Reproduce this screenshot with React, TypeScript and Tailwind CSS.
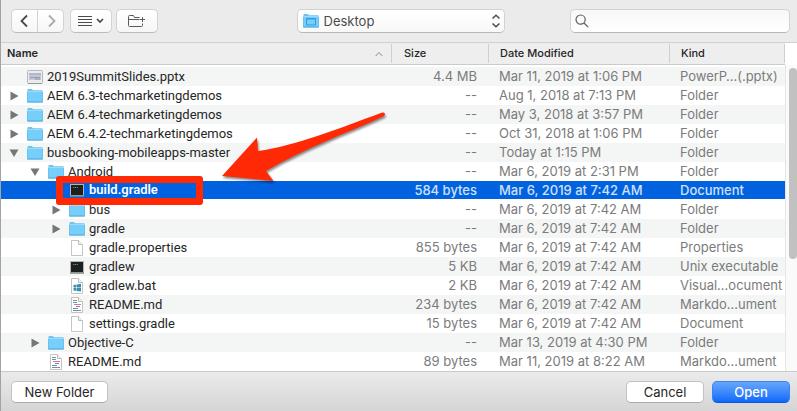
import { useState } from "react";

type IconKind = "slides" | "folder" | "terminal" | "blank" | "windows" | "markdown";

interface Entry {
  name: string;
  level: number;
  icon: IconKind;
  state?: "open" | "closed";
  size: string;
  date: string;
  kind: string;
}

const entries: Entry[] = [
  { name: "2019SummitSlides.pptx", level: 0, icon: "slides", size: "4.4 MB", date: "Mar 11, 2019 at 1:06 PM", kind: "PowerP…(.pptx)" },
  { name: "AEM 6.3-techmarketingdemos", level: 0, icon: "folder", state: "closed", size: "--", date: "Aug 1, 2018 at 7:13 PM", kind: "Folder" },
  { name: "AEM 6.4-techmarketingdemos", level: 0, icon: "folder", state: "closed", size: "--", date: "May 3, 2018 at 3:57 PM", kind: "Folder" },
  { name: "AEM 6.4.2-techmarketingdemos", level: 0, icon: "folder", state: "closed", size: "--", date: "Oct 31, 2018 at 1:06 PM", kind: "Folder" },
  { name: "busbooking-mobileapps-master", level: 0, icon: "folder", state: "open", size: "--", date: "Today at 1:15 PM", kind: "Folder" },
  { name: "Android", level: 1, icon: "folder", state: "open", size: "--", date: "Mar 6, 2019 at 2:31 PM", kind: "Folder" },
  { name: "build.gradle", level: 2, icon: "terminal", size: "584 bytes", date: "Mar 6, 2019 at 7:42 AM", kind: "Document" },
  { name: "bus", level: 2, icon: "folder", state: "closed", size: "--", date: "Mar 6, 2019 at 7:42 AM", kind: "Folder" },
  { name: "gradle", level: 2, icon: "folder", state: "closed", size: "--", date: "Mar 6, 2019 at 7:42 AM", kind: "Folder" },
  { name: "gradle.properties", level: 2, icon: "blank", size: "855 bytes", date: "Mar 6, 2019 at 7:42 AM", kind: "Properties" },
  { name: "gradlew", level: 2, icon: "terminal", size: "5 KB", date: "Mar 6, 2019 at 7:42 AM", kind: "Unix executable" },
  { name: "gradlew.bat", level: 2, icon: "windows", size: "2 KB", date: "Mar 6, 2019 at 7:42 AM", kind: "Visual…ocument" },
  { name: "README.md", level: 2, icon: "markdown", size: "234 bytes", date: "Mar 6, 2019 at 7:42 AM", kind: "Markdo…ument" },
  { name: "settings.gradle", level: 2, icon: "blank", size: "15 bytes", date: "Mar 6, 2019 at 7:42 AM", kind: "Document" },
  { name: "Objective-C", level: 1, icon: "folder", state: "closed", size: "--", date: "Mar 13, 2019 at 4:30 PM", kind: "Folder" },
  { name: "README.md", level: 1, icon: "markdown", size: "89 bytes", date: "Mar 11, 2019 at 8:22 AM", kind: "Markdo…ument" },
];

const indents = ["pl-2", "pl-[29px]", "pl-[50px]"];

function FolderIcon({ desktop = false }: { desktop?: boolean }) {
  return (
    <svg width="16" height="16" viewBox="0 0 16 16" className="shrink-0" aria-hidden="true">
      <path d="M0.5 3V1.8q0-.8.8-.8h3.4l1.3 1.3h9.2q.3 0 .3.5V5H.5z" fill="#6fc3ec" />
      <path d="M0 3.6h16v10.1q0 .8-.8.8H.8q-.8 0-.8-.8z" fill="#76cefa" />
      <path d="M0 3.5h16" stroke="#9adcfb" />
      <path d="M.3 14h15.4" stroke="#4fa9d8" />
      <path d="M.3 4v10M15.7 4v10" stroke="#5bb6e4" strokeWidth=".6" />
      {desktop && <path d="M3.5 5.5h9v6.5h-9zM3.5 6h9" fill="none" stroke="#2c9fe0" />}
    </svg>
  );
}

function PagePaths() {
  return (
    <>
      <path d="M2.5.5h7l4 4v11h-11z" fill="#fff" stroke="#c4c4c4" />
      <path d="M9.5.5v4h4" fill="#f4f4f4" stroke="#bdbdbd" />
    </>
  );
}

function FileIcon({ kind }: { kind: IconKind }) {
  if (kind === "folder") return <FolderIcon />;
  return (
    <svg width="16" height="16" viewBox="0 0 16 16" className="shrink-0" aria-hidden="true">
      {kind === "slides" && (
        <>
          <rect x=".5" y="1.5" width="15" height="13" rx="1" fill="#ececec" stroke="#b9b9b9" />
          <rect x="2" y="4" width="12" height="7" fill="#c3c9d2" />
          <path d="M2 5h12" stroke="#9aa9c4" />
          <path d="M3 8.500h10" stroke="#a694b8" />
          <path d="M8 10h5" stroke="#8d98a0" />
          <path d="M1 14.500h14" stroke="#989898" />
        </>
      )}
      {kind === "terminal" && (
        <>
          <rect x="1" y="2" width="14" height="12.500" rx=".5" fill="#b5b5b5" />
          <rect x="2" y="3" width="12" height="10" fill="#1d2021" />
          <path d="M1 14h14" stroke="#737373" />
          <path d="M4 5.500h5" stroke="#4d9a52" strokeDasharray="1.300 .5" />
        </>
      )}
      {kind === "blank" && <PagePaths />}
      {kind === "windows" && (
        <>
          <PagePaths />
          <path d="M4.500 7l3-.5v3h-3zM8 6.400l4-.6v3.700H8zM4.500 10h3v3l-3-.5zM8 10h4v3.600l-4-.6z" fill="#3b8db0" />
        </>
      )}
      {kind === "markdown" && (
        <>
          <PagePaths />
          <path d="M4 3.500h4" stroke="#8a8a8a" />
          <path d="M4 5.500h4" stroke="#4aa3bd" />
          <path d="M5 7.500h7" stroke="#d8788c" />
          <path d="M7 9.500h4" stroke="#a26be0" />
          <path d="M4 11.500h5" stroke="#4aa3bd" />
          <path d="M4 13.500h8" stroke="#8a8a8a" />
        </>
      )}
    </svg>
  );
}

function Disclosure({ state, name }: { state: "open" | "closed"; name: string }) {
  return (
    <button type="button" aria-label={`Toggle ${name}`} aria-expanded={state === "open"} className="block size-[10px]">
      <svg width="10" height="10" viewBox="0 0 10 10">
        <path d={state === "open" ? "M.5 1.500h9L5 9z" : "M1.500 .5v9L9.500 5z"} fill="#767676" />
      </svg>
    </button>
  );
}

const toolButton =
  "flex h-6 items-center justify-center border border-[#d2d2d2] border-b-[#bcbcbc] bg-linear-to-b from-white to-[#f6f6f6]";
const footerButton = "h-[22px] rounded-[5px] border text-[13px] leading-5";

export default function App() {
  const [selected, setSelected] = useState(6);

  return (
    <main className="border-l border-[#a3a3a3] bg-white font-['Inter','Liberation_Sans',sans-serif] text-[#262626]">
      <header className="grid h-[43px] grid-cols-[1fr_208px_1fr] items-center border-b border-[#d0d0d0] bg-[#ebebeb] pr-[7px] pl-[10px]">
        <div className="flex">
          <button type="button" aria-label="Back" className={`${toolButton} w-[27px] rounded-l-[5px]`}>
            <svg width="14" height="14" viewBox="0 0 14 14" fill="none" stroke="#4a4a4a" strokeWidth="1.800">
              <path d="M9 1.500L3.500 7l5.500 5.500" />
            </svg>
          </button>
          <button type="button" aria-label="Forward" className={`${toolButton} -ml-px w-[27px] rounded-r-[5px]`}>
            <svg width="14" height="14" viewBox="0 0 14 14" fill="none" stroke="#ababab" strokeWidth="1.800">
              <path d="M5 1.500L10.500 7 5 12.500" />
            </svg>
          </button>
          <button type="button" aria-label="View options" className={`${toolButton} ml-1.5 w-[42px] rounded-[5px]`}>
            <svg width="26" height="14" viewBox="0 0 26 14" fill="none" stroke="#4a4a4a">
              <path d="M0 2.500h14M0 5.500h14M0 8.500h14M0 11.500h14" />
              <path d="M19 5l3 3 3-3" strokeWidth="1.700" />
            </svg>
          </button>
          <button type="button" aria-label="Create folder" className={`${toolButton} ml-1 w-[42px] rounded-[5px]`}>
            <svg width="18" height="14" viewBox="0 0 18 14" fill="none" stroke="#5a5a5a">
              <path d="M11.500 3.500H6.500l-1-2H1.500q-1 0-1 1v9q0 1 1 1h12q1 0 1-1V9.500M.5 5.500h11M14.500 3v5M12 5.500h5" />
            </svg>
          </button>
        </div>
        <div className="relative">
          <select
            aria-label="Location"
            className="block h-6 w-full appearance-none rounded-[5px] border border-[#d2d2d2] border-b-[#b8b8b8] bg-linear-to-b from-white to-[#f8f8f8] pt-0.5 pl-[26px] text-[13px] text-[#4c4c4c]"
          >
            <option>Desktop</option>
          </select>
          <span className="pointer-events-none absolute top-1 left-1.5">
            <FolderIcon desktop />
          </span>
          <svg
            className="pointer-events-none absolute top-[5px] right-1"
            width="10"
            height="14"
            viewBox="0 0 10 14"
            fill="none"
            stroke="#4a4a4a"
            strokeWidth="1.500"
            aria-hidden="true"
          >
            <path d="M1.500 4.500L5 1.300l3.500 3.200M1.500 9.500L5 12.700l3.500-3.200" />
          </svg>
        </div>
        <div className="relative w-[220px] justify-self-end">
          <input
            type="search"
            aria-label="Search"
            className="block h-6 w-full rounded-[5px] border border-[#d2d2d2] border-b-[#b8b8b8] bg-linear-to-b from-[#f8f8f8] to-white pl-6 text-[13px]"
          />
          <svg
            className="pointer-events-none absolute top-[5px] left-[5px]"
            width="14"
            height="14"
            viewBox="0 0 14 14"
            fill="none"
            stroke="#5c5c5c"
            strokeWidth="1.200"
            aria-hidden="true"
          >
            <circle cx="5.600" cy="5.600" r="4.600" />
            <path d="M9 9l4.200 4.200" />
          </svg>
        </div>
      </header>

      <div className="relative flex">
        <table className="min-w-0 flex-1 table-fixed border-separate border-spacing-0">
          <colgroup>
            <col />
            <col className="w-[97px]" />
            <col className="w-[181px]" />
            <col className="w-[115px]" />
          </colgroup>
          <thead>
            <tr className="h-[22px] bg-[#eeeeee] text-left text-[11px] leading-[19px]">
              <th scope="col" className="border-b border-[#cbcbcb] py-px pr-0 pl-1.5 font-semibold">
                <div className="flex items-center justify-between border-r border-[#cfcfcf] pr-2">
                  Name
                  <svg width="8" height="6" viewBox="0 0 8 6" fill="none" stroke="#8a8a8a" aria-hidden="true">
                    <path d="M.7 5L4 1.500 7.300 5" />
                  </svg>
                </div>
              </th>
              <th scope="col" className="border-b border-[#cbcbcb] py-px pr-0 pl-3 font-medium">
                <div className="border-r border-[#cfcfcf]">Size</div>
              </th>
              <th scope="col" className="border-b border-[#cbcbcb] py-px pr-0 pl-[11px] font-medium">
                <div className="border-r border-[#cfcfcf]">Date Modified</div>
              </th>
              <th scope="col" className="border-b border-[#cbcbcb] py-px pr-0 pl-[11px] font-medium">
                <div className="border-r border-[#cfcfcf]">Kind</div>
              </th>
            </tr>
          </thead>
          <tbody className="text-[13px] before:block before:h-0.5 before:content-['']">
            {entries.map((e, i) => {
              const on = i === selected;
              const cell = on
                ? "border-b border-white p-0 leading-[18px] whitespace-nowrap text-[#cfe0f8]"
                : "p-0 leading-[19px] whitespace-nowrap text-[#7b7b7b]";
              return (
                <tr
                  key={i}
                  aria-selected={on}
                  onClick={() => setSelected(i)}
                  className={`h-[19px] ${on ? "bg-[#0162e0] font-medium" : i % 2 === 0 ? "bg-[#f4f5f5]" : "bg-white"}`}
                >
                  <td className={cell}>
                    <div className={`flex items-center ${indents[e.level]}`}>
                      <span className="w-[18px] shrink-0">{e.state && <Disclosure state={e.state} name={e.name} />}</span>
                      <FileIcon kind={e.icon} />
                      <span
                        className={`pl-1 font-['Roboto','Liberation_Sans',sans-serif] ${on ? "font-semibold text-white" : "text-[#262626]"}`}
                      >
                        {e.name}
                      </span>
                    </div>
                  </td>
                  <td className={`${cell} text-right`}>
                    <div className="pr-3">{e.size}</div>
                  </td>
                  <td className={cell}>
                    <div className="pl-2.5">{e.date}</div>
                  </td>
                  <td className={cell}>
                    <div className="pl-2.5">{e.kind}</div>
                  </td>
                </tr>
              );
            })}
          </tbody>
        </table>

        <div className="flex w-3 flex-col">
          <div className="h-[22px] bg-white" />
          <div className="flex-1 border-l border-[#e6e6e6] bg-[#fafafa] pt-[3px] pl-[3px]">
            <div className="h-[191px] w-2 rounded-full bg-[#c1c1c1]" />
          </div>
        </div>

        {/* Callout around the selected file, with its pointer */}
        <svg
          className="pointer-events-none absolute top-0 left-0 drop-shadow-[1px_2px_1px_rgba(0,0,0,0.45)]"
          width="400"
          height="170"
          viewBox="1 43 400 170"
          aria-hidden="true"
        >
          <path
            d="M222 176L257 137.500L258 151C295 146 340 128 381.500 112.700Q384 111.800 384.800 113.500Q385.400 115.200 383 116.500C345 134 305 148 266 171L273.500 181Z"
            fill="#ff2a05"
          />
        </svg>
        <div className="pointer-events-none absolute top-[133px] left-[55px] h-[29px] w-[147px] rounded-[3px] border-7 border-[#ff2a05]" />
      </div>

      <footer className="flex h-10 items-center gap-2 border-t border-[#c9c9c9] bg-linear-to-b from-[#ebebeb] to-[#d5d5d5] pt-px pr-[7px] pl-[10px]">
        <button type="button" className={`${footerButton} mr-auto w-[97px] border-[#c2c2c2] border-b-[#a9a9a9] bg-white`}>
          New Folder
        </button>
        <button type="button" className={`${footerButton} w-[78px] border-[#c2c2c2] border-b-[#a9a9a9] bg-white`}>
          Cancel
        </button>
        <button
          type="button"
          className={`${footerButton} w-[78px] border-[#3c83f0] border-b-[#0a5ae0] bg-linear-to-b from-[#66a6fb] to-[#0a68fb] font-medium text-white`}
        >
          Open
        </button>
      </footer>
    </main>
  );
}
